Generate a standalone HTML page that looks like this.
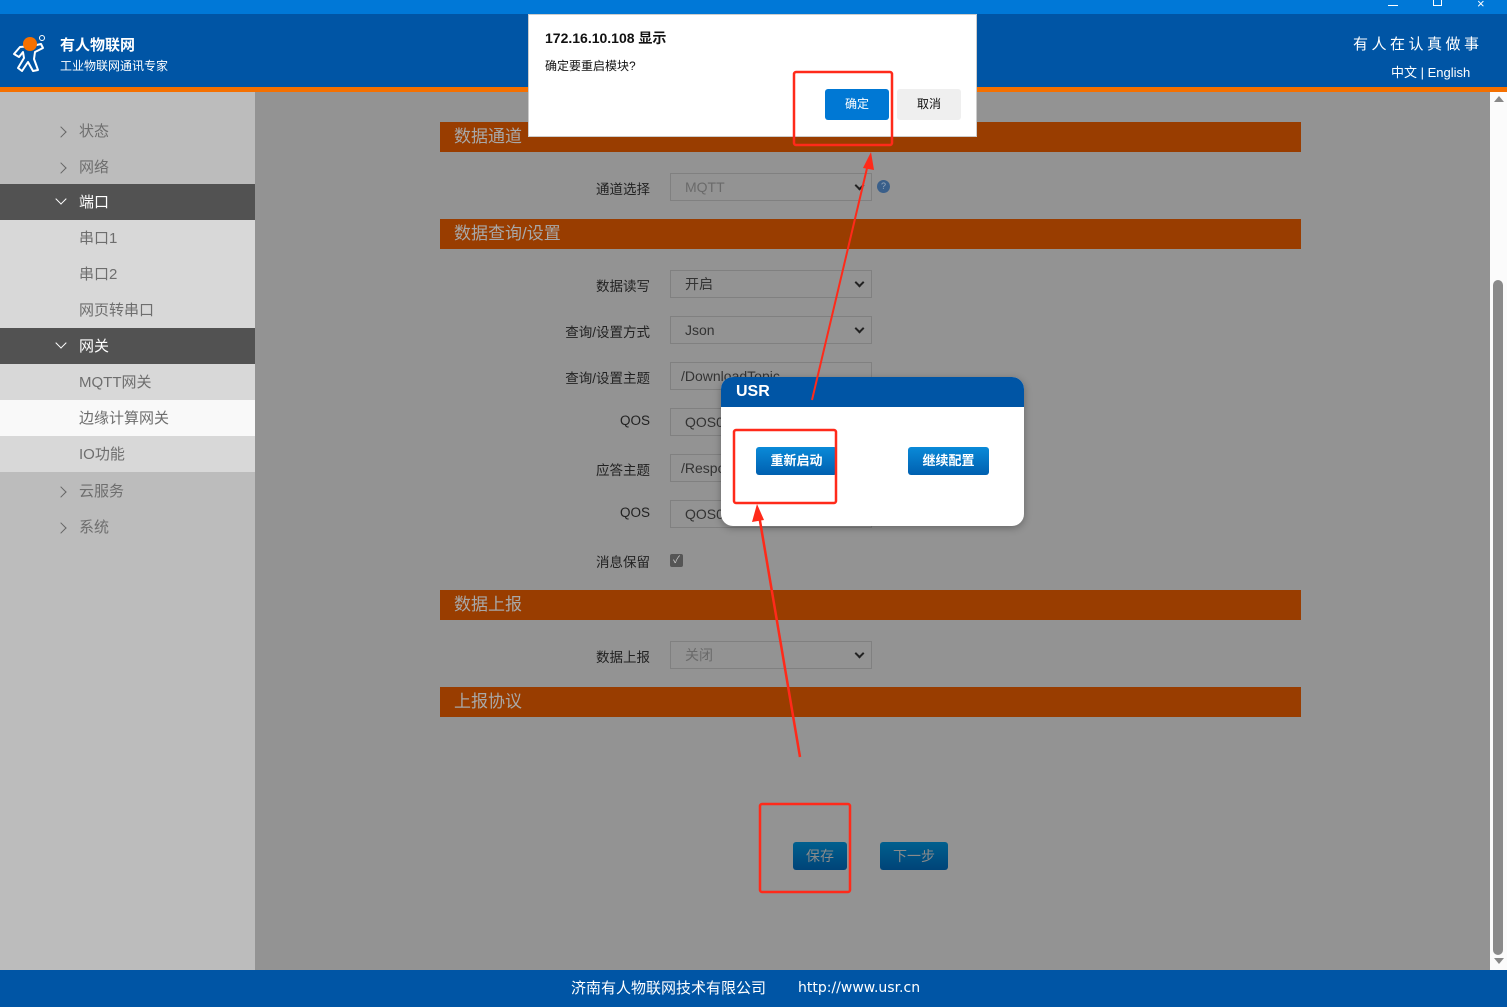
<!DOCTYPE html>
<html><head><meta charset="utf-8"><style>
*{margin:0;padding:0;box-sizing:border-box}
body{width:1507px;height:1007px;overflow:hidden;position:relative;background:#939393;font-family:"Liberation Sans","Noto Sans CJK SC",sans-serif;}
.a{position:absolute}
.top{left:0;top:0;width:1507px;height:14px;background:#0078d7}
.hdr{left:0;top:14px;width:1507px;height:73px;background:#0055a5}
.org{left:0;top:87px;width:1507px;height:5px;background:#f57000}
.side{left:0;top:92px;width:255px;height:878px;background:#bcbcbc}
.it{position:absolute;left:0;width:255px;height:36px;line-height:36px;font-size:15px;color:#6e6e6e;padding-left:79px}
.dk{background:#525252;color:#fff}
.lt{background:#d8d8d8}
.act{background:#f9f9f9}
.chev{position:absolute;left:57px;top:14px;width:8px;height:8px;border-right:1.5px solid #666;border-top:1.5px solid #666;transform:rotate(45deg)}
.dk .chev{border-color:#fff;transform:rotate(135deg);top:11px;left:57px}
.sec{position:absolute;left:440px;width:861px;height:30px;background:#993d00;color:#a8a8a8;font-size:17px;line-height:30px;padding-left:14px}
.lbl{position:absolute;width:200px;left:450px;text-align:right;font-size:13.5px;color:#222}
.sel{position:absolute;left:670px;width:202px;height:28px;border:1px solid #808080;background:#939393;font-size:14px;color:#333;line-height:26px;padding-left:14px}
.sel.dd:after{content:"";position:absolute;right:8px;top:8px;width:5px;height:5px;border-right:2px solid #222;border-bottom:2px solid #222;transform:rotate(45deg)}
.scr{left:1490px;top:92px;width:17px;height:878px;background:#fbfbfb}
.foot{left:0;top:970px;width:1507px;height:37px;background:#0055a5;color:#fff;font-size:15px;line-height:37px}
.btn{position:absolute;border-radius:3px;background:linear-gradient(#0a8ad8,#0060b0);color:#fff;font-size:13px;text-align:center;font-weight:bold}
.dbtn{position:absolute;border-radius:3px;background:linear-gradient(#00608e,#004478);color:#8a8a8a;font-size:14px;text-align:center;line-height:28px}
</style></head><body>
<div class="a top"></div>
<div class="a" style="left:1388px;top:5px;width:10px;height:1px;background:#fff"></div>
<div class="a" style="left:1433px;top:0;width:9px;height:6px;border:1px solid #fff;border-top:0"></div>
<div class="a" style="left:1477px;top:-4px;color:#fff;font-size:13px">×</div>
<div class="a hdr"></div>
<svg class="a" style="left:10px;top:30px" width="40" height="44" viewBox="0 0 40 44">
<path d="M10 17 L4 24 L9 27 L13 22 L14 28 L8 38 L12 41 L18 32 L23 41 L28 40 L24 29 L25 22 L33 18 L31 14 L22 16 Z" fill="none" stroke="#fff" stroke-width="2" stroke-linejoin="round"/>
<circle cx="20" cy="14" r="7" fill="#f57000"/>
<circle cx="32" cy="8" r="2.5" fill="none" stroke="#fff" stroke-width="1"/>
</svg>
<div class="a" style="left:60px;top:34px;color:#fff;font-size:15px;font-weight:bold">有人物联网</div>
<div class="a" style="left:60px;top:57px;color:#fff;font-size:12px">工业物联网通讯专家</div>
<div class="a" style="left:1353px;top:33px;color:#fff;font-size:15px;letter-spacing:3.5px">有人在认真做事</div>
<div class="a" style="left:1391px;top:62px;color:#fff;font-size:13px">中文 | English</div>
<div class="a org"></div>
<div class="a side">
<div class="it" style="top:22px"><span class="chev"></span>状态</div>
<div class="it" style="top:58px"><span class="chev"></span>网络</div>
<div class="it dk" style="top:92px;line-height:38px"><span class="chev"></span>端口</div>
<div class="it lt" style="top:128px;line-height:38px">串口1</div>
<div class="it lt" style="top:164px;line-height:38px">串口2</div>
<div class="it lt" style="top:200px;line-height:38px">网页转串口</div>
<div class="it dk" style="top:236px;line-height:38px"><span class="chev"></span>网关</div>
<div class="it lt" style="top:272px;line-height:38px">MQTT网关</div>
<div class="it act" style="top:308px;line-height:38px">边缘计算网关</div>
<div class="it lt" style="top:344px;line-height:38px">IO功能</div>
<div class="it" style="top:382px"><span class="chev"></span>云服务</div>
<div class="it" style="top:418px"><span class="chev"></span>系统</div>
</div>
<div class="sec" style="top:122px">数据通道</div>
<div class="lbl" style="top:178px">通道选择</div>
<div class="sel dd" style="top:173px;color:#6a6a6a">MQTT</div>
<div class="a" style="left:877px;top:180px;width:13px;height:13px;border-radius:50%;background:#3a5f8a;color:#9ab;font-size:9px;text-align:center;line-height:13px">?</div>
<div class="sec" style="top:219px">数据查询/设置</div>
<div class="lbl" style="top:275px">数据读写</div><div class="sel dd" style="top:270px">开启</div>
<div class="lbl" style="top:321px">查询/设置方式</div><div class="sel dd" style="top:316px">Json</div>
<div class="lbl" style="top:367px">查询/设置主题</div><div class="sel" style="top:362px;padding-left:10px">/DownloadTopic</div>
<div class="lbl" style="top:413px">QOS</div><div class="sel" style="top:408px">QOS0</div>
<div class="lbl" style="top:459px">应答主题</div><div class="sel" style="top:454px;padding-left:10px">/ResponseTopic</div>
<div class="lbl" style="top:505px">QOS</div><div class="sel" style="top:500px">QOS0</div>
<div class="lbl" style="top:551px">消息保留</div>
<div class="a" style="left:670px;top:554px;width:13px;height:13px;background:#555;border-radius:2px;color:#ccc;font-size:10px;line-height:13px;text-align:center">✓</div>
<div class="sec" style="top:590px">数据上报</div>
<div class="lbl" style="top:646px">数据上报</div><div class="sel dd" style="top:641px;color:#6a6a6a">关闭</div>
<div class="sec" style="top:687px">上报协议</div>
<div class="dbtn" style="left:793px;top:842px;width:54px;height:28px">保存</div>
<div class="dbtn" style="left:880px;top:842px;width:68px;height:28px">下一步</div>
<div class="a scr"></div>
<div class="a" style="left:1494px;top:96px;width:0;height:0;border-left:5px solid transparent;border-right:5px solid transparent;border-bottom:6px solid #888"></div>
<div class="a" style="left:1493px;top:280px;width:10px;height:675px;background:#8a8a8a;border-radius:5px"></div>
<div class="a" style="left:1494px;top:958px;width:0;height:0;border-left:5px solid transparent;border-right:5px solid transparent;border-top:6px solid #888"></div>
<div class="a foot"><span style="position:absolute;left:571px">济南有人物联网技术有限公司</span><span style="position:absolute;left:798px;font-family:'DejaVu Sans',sans-serif;font-size:14px">http://www.usr.cn</span></div>
<div class="a" style="left:528px;top:14px;width:449px;height:123px;background:#fff;border:1px solid #ccc">
<div class="a" style="left:16px;top:13px;font-size:14px;font-weight:bold;color:#111">172.16.10.108 显示</div>
<div class="a" style="left:16px;top:42px;font-size:12px;color:#111">确定要重启模块?</div>
<div class="a" style="left:296px;top:74px;width:64px;height:31px;background:#0078d4;border-radius:3px;color:#fff;font-size:12px;text-align:center;line-height:31px">确定</div>
<div class="a" style="left:368px;top:74px;width:64px;height:31px;background:#efefef;border-radius:3px;color:#111;font-size:12px;text-align:center;line-height:31px">取消</div>
</div>
<div class="a" style="left:721px;top:377px;width:303px;height:149px;background:#fff;border-radius:12px;overflow:hidden;box-shadow:0 2px 8px rgba(0,0,0,.3)">
<div style="height:30px;background:#0055a5;color:#fff;font-weight:bold;font-size:16px;line-height:30px;padding-left:15px">USR</div>
<div class="btn" style="left:35px;top:70px;width:81px;height:28px;line-height:28px">重新启动</div>
<div class="btn" style="left:187px;top:70px;width:81px;height:28px;line-height:28px">继续配置</div>
</div>
<svg class="a" style="left:0;top:0" width="1507" height="1007">
<g fill="none" stroke="#ff2a1a" stroke-width="2.5">
<rect x="794" y="72" width="98" height="73" rx="2"/>
<rect x="734" y="430" width="102" height="73" rx="2"/>
<rect x="760" y="804" width="90" height="88" rx="2"/>
</g>
<line x1="800" y1="757" x2="759" y2="515" stroke="#ff2a1a" stroke-width="2.5"/>
<polygon points="757,504 752,522 764,520" fill="#ff2a1a"/>
<line x1="812" y1="400" x2="868" y2="164" stroke="#ff2a1a" stroke-width="2"/>
<polygon points="871,152 863,168 874,170" fill="#ff2a1a"/>
</svg>
</body></html>
